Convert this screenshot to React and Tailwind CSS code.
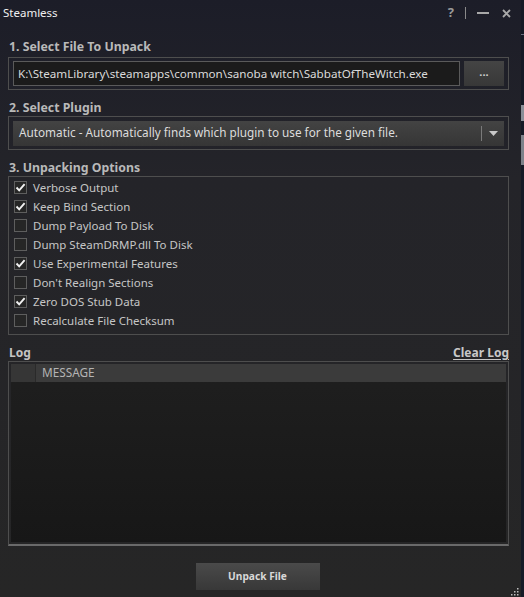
import React from "react";

const options = [
  { label: "Verbose Output", checked: true },
  { label: "Keep Bind Section", checked: true },
  { label: "Dump Payload To Disk", checked: false },
  { label: "Dump SteamDRMP.dll To Disk", checked: false },
  { label: "Use Experimental Features", checked: true },
  { label: "Don't Realign Sections", checked: false },
  { label: "Zero DOS Stub Data", checked: true },
  { label: "Recalculate File Checksum", checked: false },
];

const font = { fontFamily: '"Noto Sans", "Open Sans", sans-serif' };

function CheckBox({ checked }) {
  return (
    <div className="w-[13px] h-[13px] border border-[#5e5e5e] bg-[#262626] flex items-center justify-center shrink-0">
      {checked && (
        <svg width="11" height="11" viewBox="0 0 11 11">
          <path d="M1.5 5.5 L4.2 8.3 L9.6 2.2" fill="none" stroke="#f2f2f2" strokeWidth="1.9" />
        </svg>
      )}
    </div>
  );
}

function SectionLabel({ children, className = "" }) {
  return (
    <div className={"h-[16px] flex items-center pl-[1px] text-[12.3px] font-bold text-[#b9b9b9] " + className}>
      {children}
    </div>
  );
}

export default function App() {
  return (
    <div className="w-[524px] h-[597px] flex overflow-hidden" style={font}>
      <div className="w-[521px] h-full flex flex-col bg-gradient-to-b from-[#1c1d28] via-[#242429] via-30% to-[#262626] relative">
        {/* title bar */}
        <div className="h-[26px] flex items-center pl-[3px] pr-[10px]">
          <span className="text-[11.5px] text-[#f0f0f0]">Steamless</span>
          <div className="ml-auto flex items-center">
            <span className="text-[13px] font-bold text-[#9a9a9a] mr-[11px]">?</span>
            <div className="w-px h-[12px] bg-[#8a8a8a] mr-[11px]" />
            <div className="w-[12px] h-[2px] bg-[#a8a8a8] mr-[13px]" />
            <svg width="9" height="9" viewBox="0 0 9 9">
              <path d="M1 1 L8 8 M8 1 L1 8" stroke="#a8a8a8" strokeWidth="1.8" />
            </svg>
          </div>
        </div>

        <div className="pl-[8px] pr-[12px] flex flex-col">
          <SectionLabel className="mt-[13px]">1. Select File To Unpack</SectionLabel>
          <div className="mt-[2px] h-[33px] border border-[#4e4e4e] flex items-center px-[4px] gap-[4px]">
            <div className="flex-1 h-[25px] border border-[#5a5a5a] bg-[#1b1b1b] flex items-center pl-[4px] text-[11.65px] text-[#dadada] whitespace-nowrap overflow-hidden">
              K:\SteamLibrary\steamapps\common\sanoba witch\SabbatOfTheWitch.exe
            </div>
            <div className="w-[40px] h-[25px] bg-gradient-to-b from-[#444444] to-[#383838] flex items-center justify-center text-[11px] font-bold text-[#d0d0d0] pb-[2px]">
              ...
            </div>
          </div>

          <SectionLabel className="mt-[10px]">2. Select Plugin</SectionLabel>
          <div className="h-[34px] border border-[#4e4e4e] flex items-center px-[4px]">
            <div className="flex-1 h-[25px] bg-gradient-to-b from-[#434343] to-[#363636] flex items-center pl-[6px] text-[11.75px] text-[#dcdcdc]">
              <span>Automatic - Automatically finds which plugin to use for the given file.</span>
              <div className="ml-auto w-px h-[15px] bg-[#7a7a7a]" />
              <div className="w-[22px] flex items-center justify-center">
                <svg width="9" height="5" viewBox="0 0 9 5">
                  <path d="M0 0 L9 0 L4.5 5 Z" fill="#c8c8c8" />
                </svg>
              </div>
            </div>
          </div>

          <SectionLabel className="mt-[10px]">3. Unpacking Options</SectionLabel>
          <div className="h-[159px] border border-[#4e4e4e] pt-[1px] pl-[5px] flex flex-col">
            {options.map((o) => (
              <div key={o.label} className="h-[19px] flex items-center gap-[6px]">
                <CheckBox checked={o.checked} />
                <span className="text-[11.5px] text-[#c6c6c6]">{o.label}</span>
              </div>
            ))}
          </div>

          <div className="mt-[10px] h-[16px] flex items-center text-[12px] font-bold">
            <span className="pl-[1px] text-[#c4c4c4]">Log</span>
            <span className="ml-auto text-[#c8c8c8] underline underline-offset-2">Clear Log</span>
          </div>
          <div className="h-[185px] border border-[#4e4e4e] border-b-[#6a6a6a] border-b-2 p-[2px] flex flex-col">
            <div className="flex-1 bg-gradient-to-b from-[#1f1f1f] to-[#171717] flex flex-col">
              <div className="h-[18px] flex bg-[#3b3b3b]">
                <div className="w-[25px] bg-[#363636] border-r border-[#2a2a2a]" />
                <div className="flex items-center pl-[6px] text-[11.8px] text-[#b4b4b4]">MESSAGE</div>
              </div>
            </div>
          </div>

          <div className="mt-[17px] flex justify-center pr-[2px]">
            <div className="w-[124px] h-[27px] bg-gradient-to-b from-[#4a4a4a] to-[#383838] flex items-center justify-center text-[10.2px] font-bold text-[#d8d8d8]">
              Unpack File
            </div>
          </div>
        </div>

        {/* resize grip */}
        <svg className="absolute right-[2px] bottom-[1px]" width="9" height="9" viewBox="0 0 9 9">
          {[[7, 1], [7, 4], [4, 4], [7, 7], [4, 7], [1, 7]].map(([x, y]) => (
            <rect key={x + "-" + y} x={x} y={y} width="1.5" height="1.5" fill="#bdbdbd" />
          ))}
        </svg>
      </div>
      <div className="w-[3px] h-full bg-[#151a26] flex flex-col">
        <div className="h-[34px]" />
        <div className="h-[1px] bg-[#6a7080]" />
        <div className="h-[70px]" />
        <div className="h-[16px] bg-[#8a8f98]" />
        <div className="h-[14px]" />
        <div className="h-[30px] bg-[#7d828a]" />
      </div>
    </div>
  );
}
